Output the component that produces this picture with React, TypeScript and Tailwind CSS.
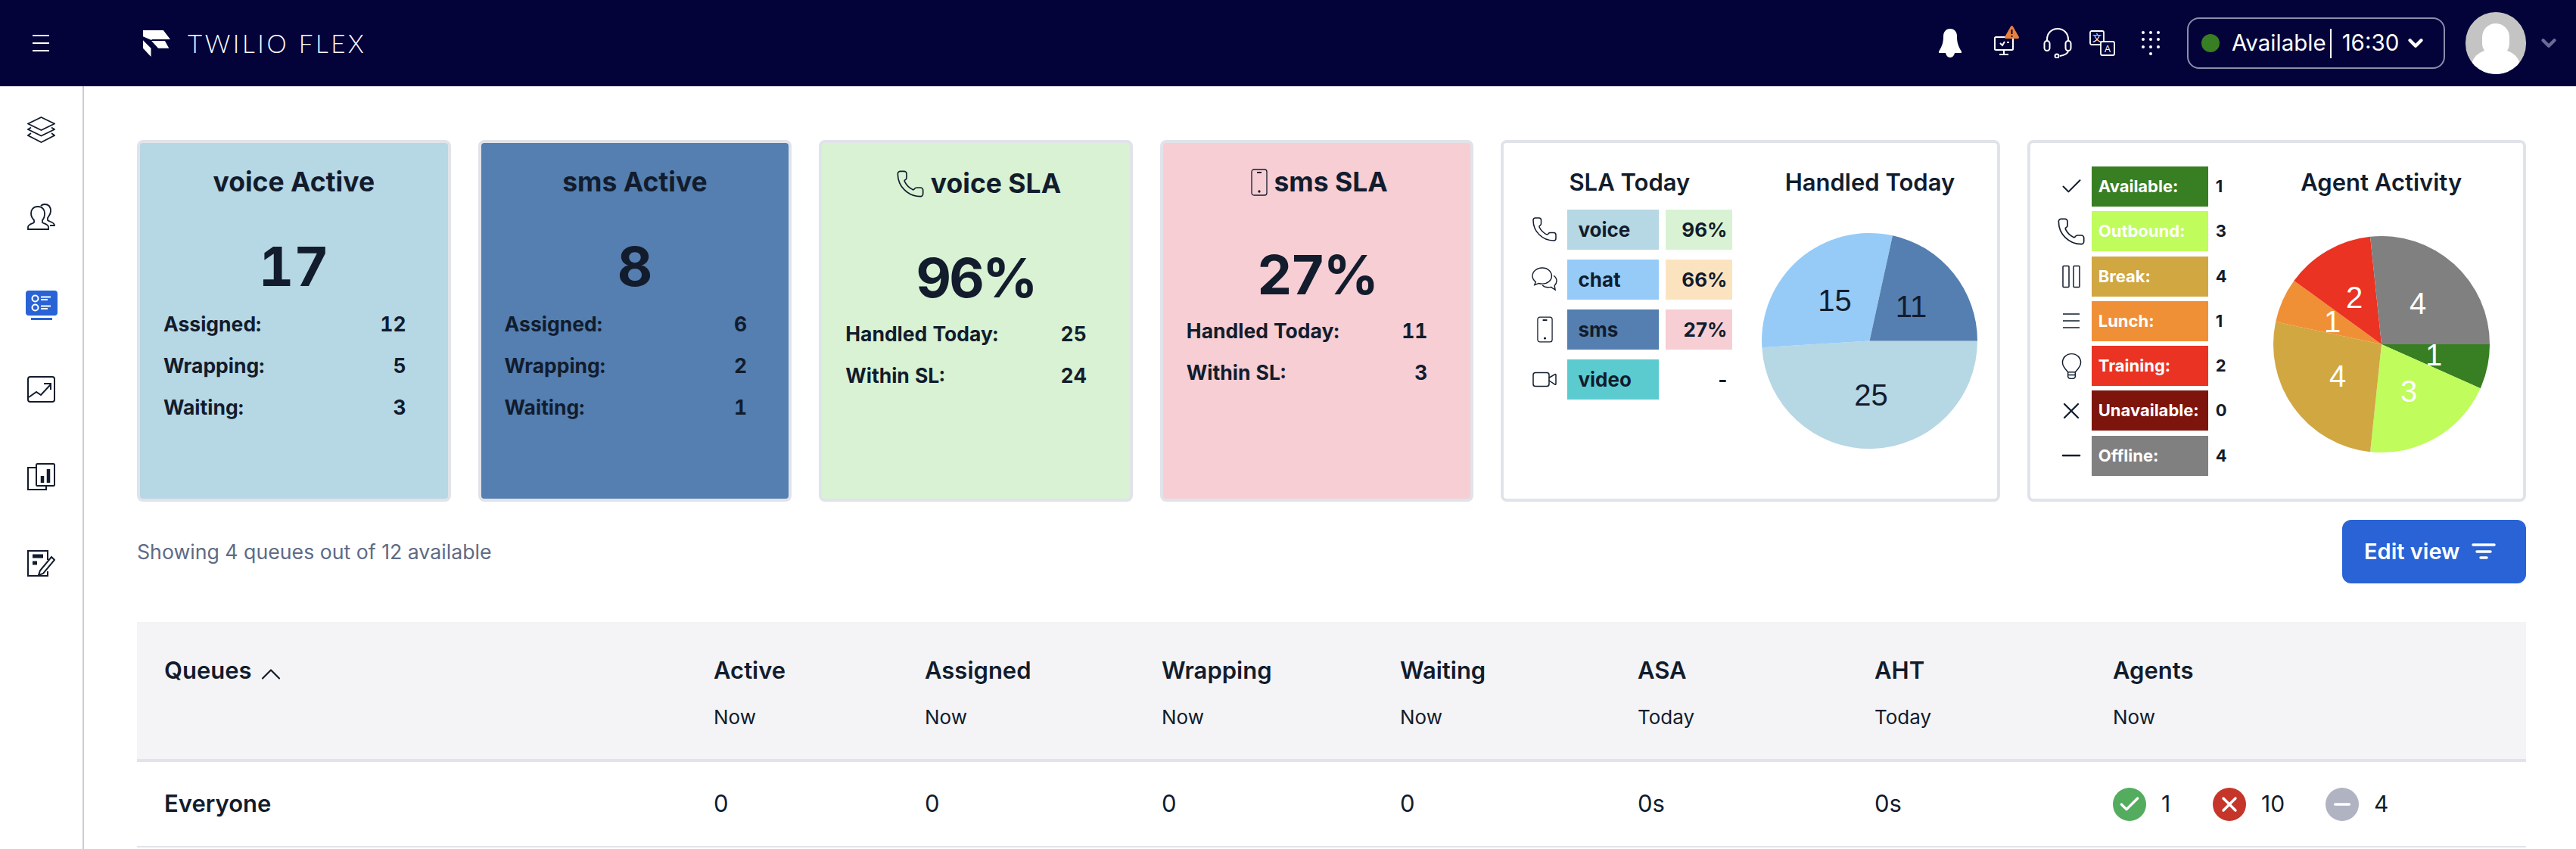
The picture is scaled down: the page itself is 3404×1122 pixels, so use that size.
import { Check, ChevronDown, ChevronUp, Minus, Phone, Video, X } from "lucide-react"

const INK = "#121c2d"

const PhoneIcon = ({ className }: { className: string }) => <Phone className={className} strokeWidth={1} />

const SmsIcon = ({ className }: { className: string }) => (
  <svg className={className} viewBox="0 0 24 36" fill="none" stroke="currentColor" strokeWidth="1.3">
    <rect x="2" y="1" width="20" height="34" rx="3" />
    <path d="M9 5h6" strokeWidth="2" />
    <circle cx="12" cy="30" r="1" fill="currentColor" />
  </svg>
)

const ChatIcon = ({ className }: { className: string }) => (
  <svg className={className} viewBox="0 0 36 34" fill="none" stroke="currentColor" strokeWidth="1.5">
    <path d="M15 1C7.5 1 1 6 1 12.5c0 3.5 2 6.3 4.5 8.3L4 25l6-2.2c1.600.5 3.200.7 5 .7 7.500 0 13-5 13-11S22.500 1 15 1z" />
    <path d="M31 12c2.500 2 4 4.500 4 7.500 0 2.500-1 4.500-3 6.500l1 6-6-4c-1.500.400-2.500.500-4 .500-3 0-6-1-8-3" />
  </svg>
)

const CheckOutline = ({ className }: { className: string }) => <Check className={className} strokeWidth={1.5} />

const PauseIcon = ({ className }: { className: string }) => (
  <svg className={className} viewBox="0 0 24 30" fill="none" stroke="currentColor" strokeWidth="1.5">
    <rect x="1" y="1" width="8" height="28" rx="1" />
    <rect x="15" y="1" width="8" height="28" rx="1" />
  </svg>
)

const LinesIcon = ({ className }: { className: string }) => (
  <svg className={className} viewBox="0 0 24 22" fill="none" stroke="currentColor" strokeWidth="1.6">
    <path d="M1 2h22M1 11h22M1 20h22" />
  </svg>
)

const BulbIcon = ({ className }: { className: string }) => (
  <svg className={className} viewBox="0 0 28 36" fill="none" stroke="currentColor" strokeWidth="1.5">
    <path d="M14 1C7 1 1.500 6 1.500 13c0 5 3.500 8.500 7.500 13h10c4-4.500 7.500-8 7.500-13C26.500 6 21 1 14 1z" />
    <path d="M9 26v6c0 2 2 3 5 3s5-1 5-3v-6M9 30h10" />
  </svg>
)

const XOutline = ({ className }: { className: string }) => <X className={className} strokeWidth={1.5} />
const MinusOutline = ({ className }: { className: string }) => <Minus className={className} strokeWidth={1.5} />

const queueCards = [
  { title: "voice Active", total: "17", bg: "bg-[#b6d7e4]", stats: [["Assigned:", "12"], ["Wrapping:", "5"], ["Waiting:", "3"]] },
  { title: "sms Active", total: "8", bg: "bg-[#547fb0]", stats: [["Assigned:", "6"], ["Wrapping:", "2"], ["Waiting:", "1"]] },
]

const slaCards = [
  { title: "voice SLA", Icon: PhoneIcon, iconClass: "w-[40px] h-[40px]", total: "96%", bg: "bg-[#d8f2d3]", stats: [["Handled Today:", "25"], ["Within SL:", "24"]] },
  { title: "sms SLA", Icon: SmsIcon, iconClass: "w-[24px] h-[36px]", total: "27%", bg: "bg-[#f6ced4]", stats: [["Handled Today:", "11"], ["Within SL:", "3"]] },
]

const slaRows = [
  { name: "voice", pct: "96%", Icon: PhoneIcon, iconClass: "w-[40px] h-[40px]", bg: "bg-[#b6d7e4]", pctBg: "bg-[#d8f2d3]" },
  { name: "chat", pct: "66%", Icon: ChatIcon, iconClass: "w-[36px] h-[32px]", bg: "bg-[#96cbf7]", pctBg: "bg-[#fce3c0]" },
  { name: "sms", pct: "27%", Icon: SmsIcon, iconClass: "w-[23px] h-[35px]", bg: "bg-[#547fb0]", pctBg: "bg-[#f6ced4]" },
  { name: "video", pct: "-", Icon: Video, iconClass: "w-[43px] h-[43px]", bg: "bg-[#5bcbd0]", pctBg: "" },
]

const activityRows = [
  { name: "Available:", count: 1, Icon: CheckOutline, iconClass: "w-[33px] h-[33px]", bg: "bg-[#387e22]" },
  { name: "Outbound:", count: 3, Icon: PhoneIcon, iconClass: "w-[40px] h-[40px]", bg: "bg-[#bffc5c]" },
  { name: "Break:", count: 4, Icon: PauseIcon, iconClass: "w-[24px] h-[31px]", bg: "bg-[#d1a741]" },
  { name: "Lunch:", count: 1, Icon: LinesIcon, iconClass: "w-[24px] h-[22px]", bg: "bg-[#f09036]" },
  { name: "Training:", count: 2, Icon: BulbIcon, iconClass: "w-[27px] h-[36px]", bg: "bg-[#ea3323]" },
  { name: "Unavailable:", count: 0, Icon: XOutline, iconClass: "w-[36px] h-[36px]", bg: "bg-[#7e150d]" },
  { name: "Offline:", count: 4, Icon: MinusOutline, iconClass: "w-[38px] h-[38px]", bg: "bg-[#808080]" },
]

const columns = [
  { title: "Active", sub: "Now", value: "0" },
  { title: "Assigned", sub: "Now", value: "0" },
  { title: "Wrapping", sub: "Now", value: "0" },
  { title: "Waiting", sub: "Now", value: "0" },
  { title: "ASA", sub: "Today", value: "0s" },
  { title: "AHT", sub: "Today", value: "0s" },
]

type Slice = { value: number; color: string }

function Pie({ slices, labels, cx, cy, r, labelColor }: {
  slices: Slice[]
  labels: { x: number; y: number; text: string }[]
  cx: number
  cy: number
  r: number
  labelColor: string
}) {
  const total = slices.reduce((sum, s) => sum + s.value, 0)
  let angle = 0
  return (
    <svg width={r * 2} height={r * 2} viewBox={`${cx - r} ${cy - r} ${r * 2} ${r * 2}`} className="block overflow-visible">
      {slices.map((s, i) => {
        const start = angle
        angle += (s.value / total) * Math.PI * 2
        const large = angle - start > Math.PI ? 1 : 0
        const x1 = cx + r * Math.cos(start)
        const y1 = cy + r * Math.sin(start)
        const x2 = cx + r * Math.cos(angle)
        const y2 = cy + r * Math.sin(angle)
        return <path key={i} d={`M${cx} ${cy}L${x1} ${y1}A${r} ${r} 0 ${large} 1 ${x2} ${y2}Z`} fill={s.color} />
      })}
      {labels.map((l, i) => (
        <text
          key={i}
          x={l.x}
          y={l.y}
          textAnchor="middle"
          dominantBaseline="central"
          fill={labelColor}
          fontSize="40"
          fontFamily="'Liberation Sans', sans-serif"
        >
          {l.text}
        </text>
      ))}
    </svg>
  )
}

function TopBar() {
  return (
    <header className="h-[114px] bg-[#03033a] flex items-center text-white shrink-0">
      <div className="ml-[43px] w-[22px] flex flex-col gap-[8px]">
        <div className="h-[2px] bg-white" />
        <div className="h-[2px] bg-white" />
        <div className="h-[2px] bg-white" />
      </div>
      <svg className="ml-[124px] w-[36px] h-[37px]" viewBox="29 15 106 103" fill="white">
        <path d="M29 15h79l27 35H64l-2 3-33-14z" />
        <path d="M62 56h52l16 29H88z" />
        <path d="M29 54l31 31v33L29 85z" />
      </svg>
      <span className="ml-[23px] text-[33px] font-light tracking-[3.600px] leading-none font-['Lato',sans-serif]">TWILIO FLEX</span>
      <div className="ml-auto flex items-center">
        <svg className="w-[30px] h-[38px]" viewBox="0 0 30 38" fill="white">
          <path d="M15 0c6 0 9 4.500 9 10 0 7 1 12 6 20 .5 1 0 2-1 2h-8c-.5 3-3 6-6 6s-5.500-3-6-6H1c-1 0-1.500-1-1-2 5-8 6-13 6-20C6 4.500 9 0 15 0z" />
        </svg>
        <div className="relative ml-[43px] w-[34px] h-[42px] mt-[-4px]">
          <svg className="absolute left-0 top-[14px] w-[26px] h-[26px]" viewBox="0 0 26 26" fill="none" stroke="white" strokeWidth="2">
            <rect x="1" y="1" width="24" height="17" rx="1.500" />
            <path d="M13 18v5M7 24h12" />
            <path d="M8 9l3 3 3-5M17 8h3" />
          </svg>
          <svg className="absolute left-[14px] top-0 w-[19px] h-[17px]" viewBox="0 0 19 17">
            <path d="M9.500 0c.7 0 1.200.4 1.500 1l7.700 13.500c.6 1.200-.1 2.500-1.500 2.500H1.800C.4 17-.3 15.700.3 14.500L8 1c.3-.6.8-1 1.500-1z" fill="#e9803c" />
            <path d="M9.500 5v6M9.500 13v1.800" stroke="#03033a" strokeWidth="2" />
          </svg>
        </div>
        <svg className="ml-[31px] w-[38px] h-[40px]" viewBox="0 0 38 40" fill="none" stroke="white" strokeWidth="2">
          <path d="M5 18v-3C5 7 11 1 19 1s14 6 14 14v3" />
          <rect x="1.500" y="17" width="7" height="13" rx="3.500" />
          <rect x="29.500" y="17" width="7" height="13" rx="3.500" />
          <path d="M33 30c0 3-4 6-11 7" />
          <circle cx="18" cy="37" r="2.500" />
        </svg>
        <svg className="ml-[23px] w-[34px] h-[34px]" viewBox="0 0 34 34" fill="none" stroke="white" strokeWidth="1.800">
          <rect x="1" y="1" width="18" height="18" rx="2" fill="#03033a" />
          <rect x="15" y="15" width="18" height="18" rx="2" fill="#03033a" />
          <text x="10" y="14.500" textAnchor="middle" fontSize="12" fill="white" stroke="none" fontFamily="'Noto Sans CJK SC', sans-serif">文</text>
          <text x="24" y="29" textAnchor="middle" fontSize="12" fill="white" stroke="none" fontFamily="'Liberation Sans', sans-serif">A</text>
        </svg>
        <div className="ml-[35px] w-[24px] grid grid-cols-3 gap-x-[5.500px] gap-y-[5.500px]">
          {Array.from({ length: 9 }).map((_, i) => (
            <div key={i} className="w-[4px] h-[4px] rounded-full bg-white" />
          ))}
          <div className="col-start-2 w-[4px] h-[4px] rounded-full bg-white" />
        </div>
        <div className="ml-[36px] w-[341px] h-[68px] rounded-[16px] border-2 border-[#8c8eab] flex items-center pl-[17px]">
          <div className="w-[24px] h-[24px] rounded-full bg-[#387e22]" />
          <span className="ml-[16px] text-[29.500px] leading-none font-['Inter',sans-serif]">Available</span>
          <div className="ml-[5px] w-[2px] h-[39px] bg-white" />
          <span className="ml-[14px] text-[29.500px] leading-none font-['Inter',sans-serif]">16:30</span>
          <ChevronDown className="ml-[7px] w-[30px] h-[30px]" strokeWidth={3.500} />
        </div>
        <div className="ml-[27px] w-[80px] h-[82px] rounded-full bg-[#c4c4c4] overflow-hidden relative">
          <div className="absolute left-[22px] top-[15px] w-[36px] h-[44px] rounded-full bg-white" />
          <div className="absolute left-[7px] top-[50px] w-[66px] h-[50px] rounded-full bg-white" />
        </div>
        <ChevronDown className="ml-[15px] mr-[21px] w-[30px] h-[30px] text-[#6a6c96]" strokeWidth={3.500} />
      </div>
    </header>
  )
}

function SideNav() {
  return (
    <nav className="w-[111px] shrink-0 border-r-2 border-[#cacdd8] flex flex-col items-center pt-[40px] text-[#121c2d]">
      <svg className="w-[37px] h-[35px]" viewBox="0 0 37 35" fill="none" stroke="currentColor" strokeWidth="1.800">
        <path d="M18.500 1L36 9.500 18.500 18 1 9.500z" />
        <path d="M5 14.500L1 17l17.500 8.500L36 17l-4-2.500" />
        <path d="M5 22L1 25l17.500 9L36 25l-4-3" />
      </svg>
      <svg className="mt-[80px] w-[37px] h-[35px]" viewBox="0 0 37 35" fill="none" stroke="currentColor" strokeWidth="1.800">
        <path d="M14 4c-6 0-9 4-9 9 0 4 2 7 4 9v3c0 1-8 2-8 6v3h27v-3c0-4-8-5-8-6v-3c2-2 3-5 3-9 0-5-3-9-9-9z" />
        <path d="M18 3c1-1 3-2 5-2 6 0 8 4 8 9 0 4-2 6-4 9v3c1 2 9 2 9 7h-6" />
      </svg>
      <div className="mt-[80px] flex flex-col items-center">
        <div className="w-[42px] h-[33px] rounded-[4px] bg-[#2963d5] flex flex-col justify-center gap-[3px] pl-[7px]">
          <svg className="w-[28px] h-[23px]" viewBox="0 0 28 23" fill="none" stroke="white" strokeWidth="2">
            <circle cx="5.500" cy="5.500" r="4" />
            <circle cx="5.500" cy="17.500" r="4" />
            <path d="M13 3.500h13M13 7h9M13 15.500h13M13 19h9" />
          </svg>
        </div>
        <div className="mt-[3px] w-[28px] h-[3px] bg-[#2963d5]" />
      </div>
      <svg className="mt-[74px] w-[37px] h-[35px]" viewBox="0 0 37 35" fill="none" stroke="currentColor" strokeWidth="2">
        <rect x="1" y="1" width="35" height="33" rx="3" />
        <path d="M2 28l10-7 6 4 13-14M22 10h9v8" />
      </svg>
      <svg className="mt-[80px] w-[37px] h-[36px]" viewBox="0 0 37 36" fill="none" stroke="currentColor" strokeWidth="2">
        <path d="M12 6H1v29h24v-5" />
        <rect x="12" y="1" width="24" height="29" rx="1.500" />
        <path d="M20 17v9M28 8v18" strokeWidth="4.500" />
      </svg>
      <svg className="mt-[79px] w-[37px] h-[35px]" viewBox="0 0 37 35" fill="none" stroke="currentColor" strokeWidth="2">
        <path d="M27 13V1H1v33h26v-6" />
        <path d="M7 8h14M7 17h6" strokeWidth="5" />
        <path d="M17 27l-2 6 6-2L36 13l-4-4z" />
      </svg>
    </nav>
  )
}

function QueueCard({ card }: { card: (typeof queueCards)[number] }) {
  return (
    <div className={`w-[415px] h-[478px] rounded-[8px] border-4 border-[#e1e3ea] px-[31px] pt-[34px] ${card.bg}`}>
      <h3 className="text-center text-[35.500px] leading-[36px] font-bold">{card.title}</h3>
      <div className="mt-[57px] text-center text-[72px] leading-[72px] font-bold tabular-nums">{card.total}</div>
      <div className="mt-[25px] pr-[24px] flex flex-col gap-[25px]">
        {card.stats.map(([label, value]) => (
          <div key={label} className="flex justify-between text-[26.500px] leading-[30px] font-bold tabular-nums">
            <span>{label}</span>
            <span>{value}</span>
          </div>
        ))}
      </div>
    </div>
  )
}

function SlaCard({ card }: { card: (typeof slaCards)[number] }) {
  const { Icon } = card
  return (
    <div className={`w-[415px] h-[478px] rounded-[8px] border-4 border-[#e1e3ea] px-[31px] pt-[34px] ${card.bg}`}>
      <h3 className="flex items-center justify-center gap-[7px] pl-[6px] text-[35.500px] leading-[36px] font-bold">
        <Icon className={card.iconClass} />
        {card.title}
      </h3>
      <div className="mt-[68px] text-center text-[72px] leading-[72px] font-bold tabular-nums tracking-[-2.700px]">{card.total}</div>
      <div className="mt-[23px] pr-[26px] flex flex-col gap-[25px]">
        {card.stats.map(([label, value]) => (
          <div key={label} className="flex justify-between text-[26.500px] leading-[30px] font-bold tabular-nums">
            <span>{label}</span>
            <span>{value}</span>
          </div>
        ))}
      </div>
    </div>
  )
}

function SlaTodayCard() {
  return (
    <div className="w-[660px] h-[478px] rounded-[8px] border-4 border-[#e1e3ea] flex pl-[36px] pt-[34px]">
      <div className="w-[268px]">
        <h3 className="pl-[50px] text-[31px] leading-[36px] font-semibold whitespace-nowrap">SLA Today</h3>
        <div className="mt-[18px] flex flex-col gap-[13.500px]">
          {slaRows.map(({ name, pct, Icon, iconClass, bg, pctBg }) => (
            <div key={name} className="flex items-center h-[52.500px]">
              <div className="w-[48px] flex justify-center pr-[12px]">
                <Icon className={iconClass} strokeWidth={1} />
              </div>
              <div className={`w-[121px] h-full flex items-center pl-[14px] text-[26px] font-bold ${bg}`}>{name}</div>
              <div className={`ml-[9px] w-[88px] h-full flex items-center justify-end pr-[7px] text-[26px] font-bold ${pctBg}`}>{pct}</div>
            </div>
          ))}
        </div>
      </div>
      <div className="ml-[37px] w-[285px]">
        <h3 className="text-center text-[31px] leading-[36px] font-semibold whitespace-nowrap">Handled Today</h3>
        <div className="mt-[49px]">
          <Pie
            cx={0}
            cy={0}
            r={142.500}
            labelColor="#121c2d"
            slices={[
              { value: 25, color: "#b6d7e4" },
              { value: 15, color: "#96cbf7" },
              { value: 11, color: "#547fb0" },
            ]}
            labels={[
              { x: 2, y: 71, text: "25" },
              { x: -46, y: -54, text: "15" },
              { x: 55, y: -46, text: "11" },
            ]}
          />
        </div>
      </div>
    </div>
  )
}

function AgentActivityCard() {
  return (
    <div className="w-[660px] h-[478px] rounded-[8px] border-4 border-[#e1e3ea] flex pl-[32px] pt-[31px]">
      <div className="w-[250px] flex flex-col gap-[6.300px]">
        {activityRows.map(({ name, count, Icon, iconClass, bg }) => (
          <div key={name} className="flex items-center h-[53px]">
            <div className="w-[49px] flex justify-center pr-[4px]">
              <Icon className={iconClass} />
            </div>
            <div className={`w-[154px] h-full flex items-center pl-[9px] text-[22px] font-bold text-white whitespace-nowrap ${bg}`}>{name}</div>
            <span className="ml-[10px] text-[22px] font-bold">{count}</span>
          </div>
        ))}
      </div>
      <div className="ml-[39px] w-[286px]">
        <h3 className="mt-[3px] text-center text-[31px] leading-[36px] font-semibold whitespace-nowrap">Agent Activity</h3>
        <div className="mt-[53px]">
          <Pie
            cx={0}
            cy={0}
            r={143}
            labelColor="#ffffff"
            slices={[
              { value: 1, color: "#387e22" },
              { value: 3, color: "#bffc5c" },
              { value: 4, color: "#d1a741" },
              { value: 1, color: "#f09036" },
              { value: 2, color: "#ea3323" },
              { value: 4, color: "#808080" },
            ]}
            labels={[
              { x: 69, y: 14, text: "1" },
              { x: 36, y: 62, text: "3" },
              { x: -58, y: 42, text: "4" },
              { x: -65, y: -30, text: "1" },
              { x: -36, y: -62, text: "2" },
              { x: 48, y: -54, text: "4" },
            ]}
          />
        </div>
      </div>
    </div>
  )
}

function AgentStat({ color, count, children, className }: { color: string; count: string; children: React.ReactNode; className: string }) {
  return (
    <div className={`flex items-center ${className}`}>
      <div className={`w-[44px] h-[44px] rounded-full flex items-center justify-center text-white ${color}`}>{children}</div>
      <span className="ml-[20px] text-[30px]">{count}</span>
    </div>
  )
}

function QueuesTable() {
  return (
    <div className="mt-[51px] w-[3157px]">
      <div className="h-[185px] bg-[#f4f4f6] border-b-4 border-[#e1e3ea] grid grid-cols-[726px_279px_313px_315px_314px_313px_315px_1fr] pl-[36px] pt-[46px]">
        <div className="flex items-start gap-[3px]">
          <span className="text-[31px] leading-[36px] font-semibold">Queues</span>
          <ChevronUp className="mt-[1px] w-[44px] h-[44px]" strokeWidth={1.200} />
        </div>
        {[...columns, { title: "Agents", sub: "Now", value: "" }].map((c) => (
          <div key={c.title}>
            <div className="text-[31px] leading-[36px] font-semibold">{c.title}</div>
            <div className="mt-[26px] text-[26px] leading-[36px]">{c.sub}</div>
          </div>
        ))}
      </div>
      <div className="h-[113px] border-b-2 border-[#e1e3ea] grid grid-cols-[726px_279px_313px_315px_314px_313px_315px_1fr] items-center pl-[36px]">
        <span className="text-[31px] font-semibold">Everyone</span>
        {columns.map((c) => (
          <span key={c.title} className="text-[31px]">{c.value}</span>
        ))}
        <div className="flex items-center whitespace-nowrap">
          <AgentStat color="bg-[#54ad5f]" count="1" className="w-[132px]">
            <Check className="w-[32px] h-[32px]" strokeWidth={2.500} />
          </AgentStat>
          <AgentStat color="bg-[#c6352a]" count="10" className="w-[149px]">
            <X className="w-[32px] h-[32px]" strokeWidth={2.500} />
          </AgentStat>
          <AgentStat color="bg-[#b0b3c2]" count="4" className="w-[100px]">
            <Minus className="w-[32px] h-[32px]" strokeWidth={2.500} />
          </AgentStat>
        </div>
      </div>
    </div>
  )
}

export default function App() {
  return (
    <div className="h-[1122px] overflow-hidden flex flex-col bg-white font-['Inter',sans-serif]" style={{ color: INK }}>
      <TopBar />
      <div className="flex flex-1 min-h-0">
        <SideNav />
        <main className="pl-[70px] pt-[71px]">
          <div className="flex gap-[36px] w-[3157px]">
            {queueCards.map((card) => (
              <QueueCard key={card.title} card={card} />
            ))}
            {slaCards.map((card) => (
              <SlaCard key={card.title} card={card} />
            ))}
            <SlaTodayCard />
            <AgentActivityCard />
          </div>
          <div className="mt-[24px] w-[3157px] flex items-start justify-between">
            <span className="mt-[24px] text-[26.700px] leading-[36px] text-[#606b85]">Showing 4 queues out of 12 available</span>
            <button className="w-[243px] h-[84px] rounded-[12px] bg-[#2963d5] text-white flex items-center pl-[29px] gap-[16px] text-[29px] font-semibold">
              Edit view
              <svg className="w-[32px] h-[26px]" viewBox="0 0 32 26" fill="none" stroke="white" strokeWidth="3.500" strokeLinecap="round">
                <path d="M2 4h28M7 13h18M12 21h8" />
              </svg>
            </button>
          </div>
          <QueuesTable />
        </main>
      </div>
    </div>
  )
}
